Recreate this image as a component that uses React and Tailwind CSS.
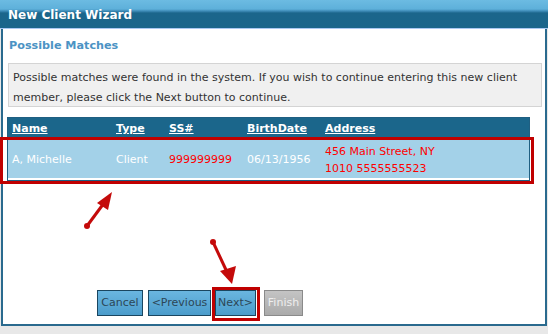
export default function App() {
  const font = { fontFamily: '"DejaVu Sans", Verdana, sans-serif' };
  return (
    <div className="relative w-[548px] h-[334px] overflow-hidden bg-[#e8e8e8] text-[11px]" style={font}>
      <div className="h-[28px] bg-[linear-gradient(to_bottom,#6cbbe2_0px,#5eb0da_9px,#3f8db8_11px,#1b668b_13px,#1a668b_28px)] flex items-center pl-[8px] pt-[1px]">
        <span className="text-white font-bold text-[12px]">New Client Wizard</span>
      </div>
      <div className="h-px bg-[#a9c9f2]" />
      <div className="ml-px w-[546px] h-[297px] bg-white border-x-2 border-b-2 border-[#2a6a8e] border-t-0 flex flex-col">
        <div className="h-[34px] flex items-center pl-[6px]">
          <span className="text-[#4b93c4] font-bold text-[11.2px]">Possible Matches</span>
        </div>
        <div className="ml-[5px] w-[534px] h-[44px] bg-[#f0f0f0] border border-[#d4d4d4] px-[4px] pt-[4px] leading-[20px] text-[#333]">
          Possible matches were found in the system. If you wish to continue entering this new client member, please click the Next button to continue.
        </div>
        <div className="ml-[4px] mt-[10px] w-[523px] border border-[#1f5f82] bg-[#1b668b]">
          <div className="h-[21px] flex items-center text-white font-bold underline pt-[1px]">
            <span className="w-[108px] pl-[4px]">Name</span>
            <span className="w-[53px]">Type</span>
            <span className="w-[78px]">SS#</span>
            <span className="w-[78px]">BirthDate</span>
            <span>Address</span>
          </div>
          <div className="h-[41px] bg-[#a3d1e8] border-t border-b-2 border-white flex items-center text-white pt-[2px]">
            <span className="w-[108px] pl-[4px]">A, Michelle</span>
            <span className="w-[53px]">Client</span>
            <span className="w-[78px] text-[#ff0000]">999999999</span>
            <span className="w-[78px]">06/13/1956</span>
            <span className="flex flex-col text-[#ff0000] leading-[17px]">
              <span>456 Main Street, NY</span>
              <span>1010 5555555523</span>
            </span>
          </div>
        </div>
        <div className="flex-1" />
        <div className="flex items-start pl-[94px] mb-[8px] text-[11px]">
          <button className="w-[46px] h-[26px] border border-[#1a4660] bg-[linear-gradient(to_bottom,#6ab6e0,#4b9ccb)] text-[#2c4656]">Cancel</button>
          <button className="ml-[5px] w-[63px] h-[26px] border border-[#1a4660] bg-[linear-gradient(to_bottom,#6ab6e0,#4b9ccb)] text-[#2c4656]">&lt;Previous</button>
          <button className="ml-[4px] w-[41px] h-[26px] border border-[#1a4660] bg-[linear-gradient(to_bottom,#6ab6e0,#4b9ccb)] text-[#2c4656]">Next&gt;</button>
          <button className="ml-[8px] w-[39px] h-[26px] border border-[#8a8a8a] bg-[linear-gradient(to_bottom,#c4c4c4,#aaaaaa)] text-[#eeeeee]">Finish</button>
        </div>
      </div>

      {/* annotations */}
      <div className="absolute left-0 top-[137px] w-[534px] h-[47px] border-[3px] border-[#c00000]" />
      <div className="absolute left-[212px] top-[287px] w-[48px] h-[34px] border-[3px] border-[#c00000]" />
      <svg className="absolute left-0 top-0" width="548" height="334" viewBox="0 0 548 334">
        <g fill="#c40a0a" stroke="#c40a0a">
          <circle cx="87" cy="226" r="3" stroke="none" />
          <line x1="87" y1="226" x2="104" y2="203" strokeWidth="3" />
          <polygon points="112,192 97,203 108,210" stroke="none" />
          <circle cx="213" cy="242" r="3" stroke="none" />
          <line x1="213" y1="242" x2="227" y2="272" strokeWidth="3" />
          <polygon points="232,284 220,271 236,266" stroke="none" />
        </g>
      </svg>
    </div>
  );
}
